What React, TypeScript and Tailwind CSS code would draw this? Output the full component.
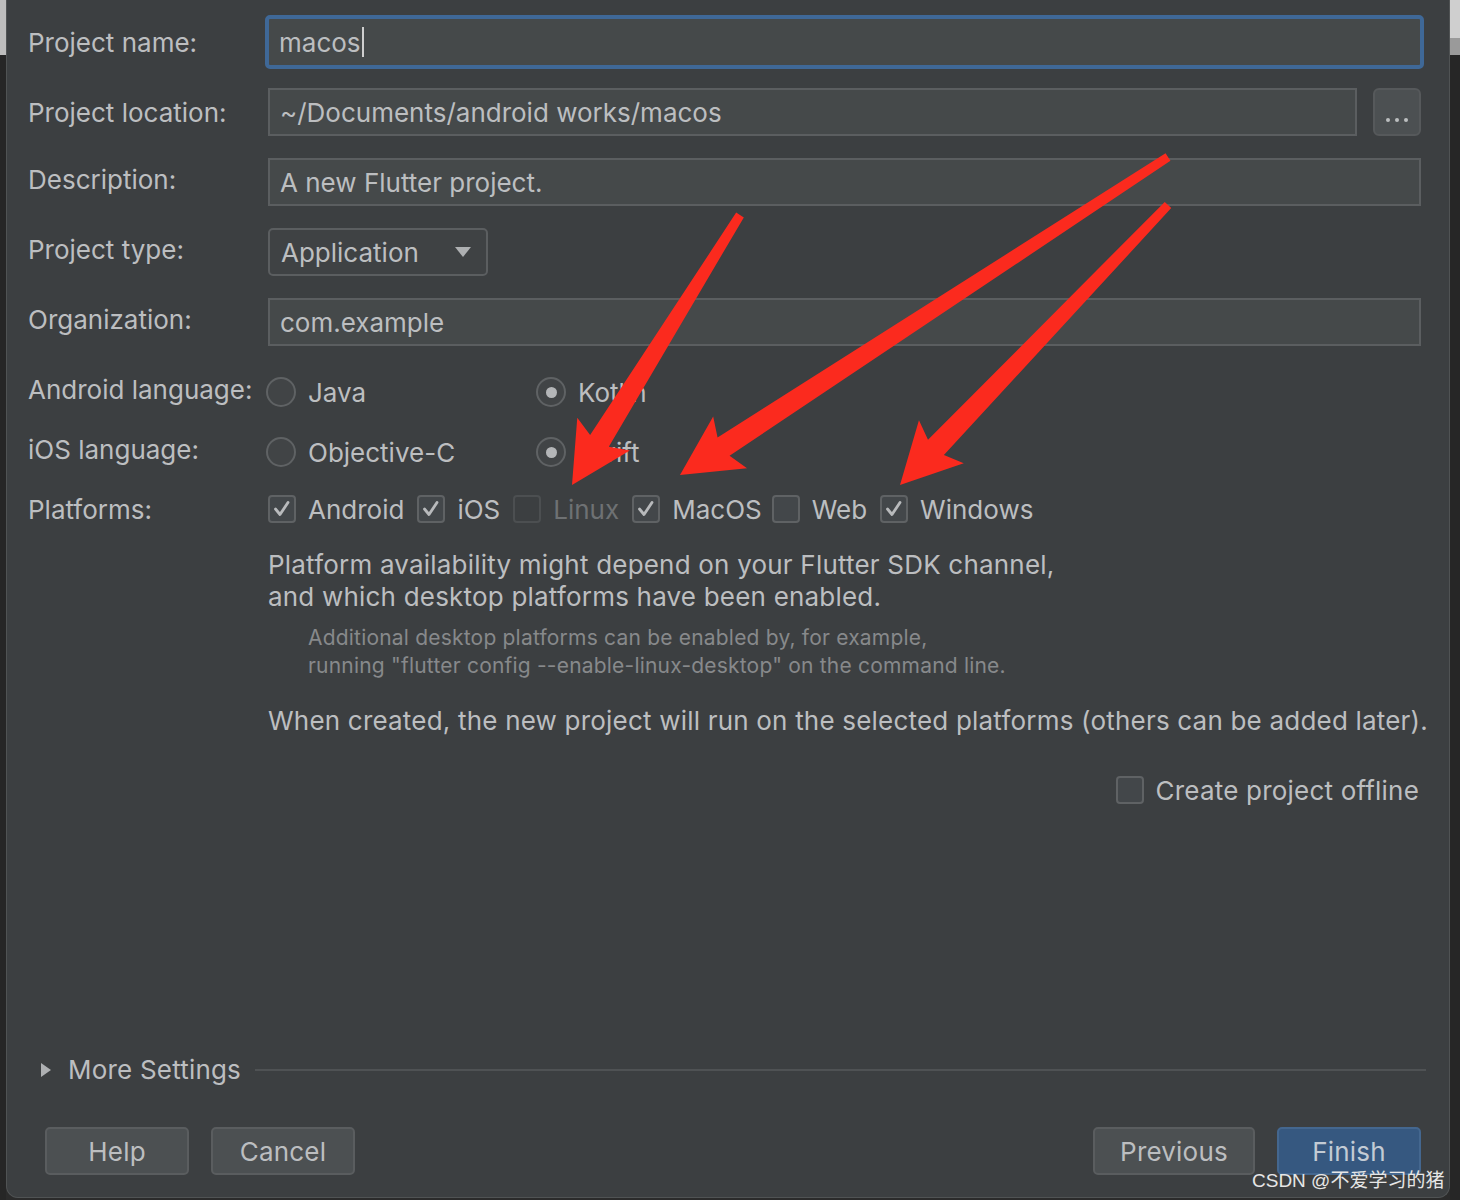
import React from "react"

const font = { fontFamily: "Inter, 'Noto Sans', sans-serif" }

function arrowPoints(t: [number, number], p: [number, number], headLen: number, headW: number, neckW: number, tailW: number) {
  const dx = p[0] - t[0]
  const dy = p[1] - t[1]
  const len = Math.hypot(dx, dy)
  const ux = dx / len
  const uy = dy / len
  const nx = -uy
  const ny = ux
  const bx = p[0] - ux * headLen
  const by = p[1] - uy * headLen
  // wings sit a little further back than the neck, like a marker arrow
  const wx = p[0] - ux * headLen * 1.15
  const wy = p[1] - uy * headLen * 1.15
  const pts: [number, number][] = [
    [t[0] + (nx * tailW) / 2, t[1] + (ny * tailW) / 2],
    [bx + (nx * neckW) / 2, by + (ny * neckW) / 2],
    [wx + (nx * headW) / 2, wy + (ny * headW) / 2],
    p,
    [wx - (nx * headW) / 2, wy - (ny * headW) / 2],
    [bx - (nx * neckW) / 2, by - (ny * neckW) / 2],
    [t[0] - (nx * tailW) / 2, t[1] - (ny * tailW) / 2],
  ]
  return pts.map((q) => q.join(",")).join(" ")
}

const arrows: { t: [number, number]; p: [number, number] }[] = [
  { t: [740, 215], p: [572, 485] },
  { t: [1168, 157], p: [680, 475] },
  { t: [1168, 205], p: [900, 485] },
]

function Label({ children, up }: { children: React.ReactNode; up?: boolean }) {
  return (
    <div className={`w-[240px] shrink-0 text-[26px] text-[#bcbec0] whitespace-nowrap ${up ? "mb-[6px]" : ""}`}>
      {children}
    </div>
  )
}

function Field({ value, className = "" }: { value: string; className?: string }) {
  return (
    <div className={`h-[48px] flex-1 bg-[#45494a] border-2 border-[#5b5e60] flex items-center px-[10px] text-[26px] text-[#bcbec0] ${className}`}>
      {value}
    </div>
  )
}

function Radio({ checked }: { checked?: boolean }) {
  return (
    <div className="w-[30px] h-[30px] rounded-full border-2 border-[#5f6264] bg-[#414446] flex items-center justify-center shrink-0">
      {checked && <div className="w-[11px] h-[11px] rounded-full bg-[#b4b6b8]" />}
    </div>
  )
}

function Checkbox({ checked, dim }: { checked?: boolean; dim?: boolean }) {
  return (
    <div
      className={`w-[28px] h-[28px] rounded-[4px] border-2 flex items-center justify-center shrink-0 ${
        dim ? "border-[#4c4f51] bg-[#3c3f41]" : "border-[#5f6264] bg-[#43474a]"
      }`}
    >
      {checked && (
        <svg width="20" height="20" viewBox="0 0 20 20" fill="none">
          <path d="M3.5 10 L8 15.5 L16 3.5" stroke="#b8babc" strokeWidth="2.8" strokeLinecap="round" strokeLinejoin="round" />
        </svg>
      )}
    </div>
  )
}

function Platform({ name, checked, dim }: { name: string; checked?: boolean; dim?: boolean }) {
  return (
    <div className="flex items-center gap-[12px]">
      <Checkbox checked={checked} dim={dim} />
      <span className={dim ? "text-[#6e7173]" : "text-[#bcbec0]"}>{name}</span>
    </div>
  )
}

function Button({ children, primary }: { children: React.ReactNode; primary?: boolean }) {
  return (
    <div
      className={`h-[48px] rounded-[5px] border-2 flex items-center justify-center text-[26px] tracking-[0.2px] ${
        primary ? "bg-[#365880] border-[#44678f] text-[#c3cbd4]" : "bg-[#4c5052] border-[#5a5d5f] text-[#bcbec0]"
      }`}
    >
      {children}
    </div>
  )
}

export default function App() {
  return (
    <div className="w-[1460px] h-[1200px] bg-[#2b2b2b] flex relative overflow-hidden" style={font}>
      {/* strip of the window behind, left */}
      <div className="w-[6px] flex flex-col shrink-0">
        <div className="h-[55px] bg-[#bdbdbd]" />
        <div className="flex-1 bg-[#262626]" />
      </div>

      {/* dialog */}
      <div className="w-[1444px] h-[1198px] bg-[#3c3f41] border-x border-b border-[#505354] rounded-b-[12px] flex flex-col pl-[21px] pr-[28px] pt-[16px] pb-[22px]">
        <div className="flex items-center h-[52px]">
          <Label>Project name:</Label>
          <div className="h-[54px] flex-1 ml-[-3px] mr-[-3px] rounded-[5px] border-[4px] border-[#3f6897] bg-[#45494a] flex items-center px-[10px] text-[26px] text-[#bcbec0]">
            macos
            <span className="w-[2px] h-[30px] bg-[#cfcfcf] ml-[1px]" />
          </div>
        </div>

        <div className="flex items-center h-[48px] mt-[20px]">
          <Label>Project location:</Label>
          <Field value="~/Documents/android works/macos" />
          <div className="w-[48px] h-[48px] ml-[16px] rounded-[6px] border-2 border-[#56595b] bg-[#4c5052] flex items-end justify-center pb-[12px] gap-[5px]">
            <span className="w-[4px] h-[4px] rounded-full bg-[#bcbec0]" />
            <span className="w-[4px] h-[4px] rounded-full bg-[#bcbec0]" />
            <span className="w-[4px] h-[4px] rounded-full bg-[#bcbec0]" />
          </div>
        </div>

        <div className="flex items-center h-[48px] mt-[22px]">
          <Label up>Description:</Label>
          <Field value="A new Flutter project." />
        </div>

        <div className="flex items-center h-[48px] mt-[22px]">
          <Label up>Project type:</Label>
          <div className="w-[220px] h-[48px] rounded-[5px] border-2 border-[#5b5e60] bg-[#3f4244] flex items-center justify-between pl-[11px] pr-[14px] text-[26px] text-[#bcbec0]">
            Application
            <svg width="18" height="12" viewBox="0 0 18 12">
              <path d="M1 1 H17 L9 11 Z" fill="#aeb0b2" />
            </svg>
          </div>
        </div>

        <div className="flex items-center h-[48px] mt-[22px]">
          <Label up>Organization:</Label>
          <Field value="com.example" />
        </div>

        <div className="flex items-center h-[32px] mt-[30px] text-[26px] text-[#bcbec0]">
          <Label up>Android language:</Label>
          <div className="flex items-center gap-[12px] w-[270px] ml-[-2px]">
            <Radio />
            <span>Java</span>
          </div>
          <div className="flex items-center gap-[12px]">
            <Radio checked />
            <span>Kotlin</span>
          </div>
        </div>

        <div className="flex items-center h-[32px] mt-[28px] text-[26px] text-[#bcbec0]">
          <Label up>iOS language:</Label>
          <div className="flex items-center gap-[12px] w-[270px] ml-[-2px]">
            <Radio />
            <span>Objective-C</span>
          </div>
          <div className="flex items-center gap-[12px]">
            <Radio checked />
            <span>Swift</span>
          </div>
        </div>

        <div className="flex items-center h-[28px] mt-[27px] text-[26px]">
          <Label>Platforms:</Label>
          <div className="flex items-center gap-[13px]">
            <Platform name="Android" checked />
            <Platform name="iOS" checked />
            <Platform name="Linux" dim />
            <div className="flex items-center gap-[10px]">
              <Platform name="MacOS" checked />
              <Platform name="Web" />
            </div>
            <Platform name="Windows" checked />
          </div>
        </div>

        <div className="ml-[240px] flex flex-col">
          <p className="mt-[26px] text-[26px] leading-[32px] text-[#bcbec0] tracking-[0.2px]">
            Platform availability might depend on your Flutter SDK channel,
            <br />
            and which desktop platforms have been enabled.
          </p>
          <p className="mt-[11px] ml-[40px] text-[21px] leading-[28px] text-[#87898b] tracking-[0.2px]">
            Additional desktop platforms can be enabled by, for example,
            <br />
            running "flutter config --enable-linux-desktop" on the command line.
          </p>
          <p className="mt-[25px] text-[26px] leading-[32px] text-[#bcbec0] whitespace-nowrap tracking-[0.2px]">
            When created, the new project will run on the selected platforms (others can be added later).
          </p>
          <div className="mt-[37px] mr-[2px] self-end flex items-center gap-[12px] h-[32px] text-[26px] text-[#bcbec0] tracking-[0.2px]">
            <Checkbox />
            <span>Create project offline</span>
          </div>
        </div>

        <div className="flex-1" />

        <div className="flex items-center h-[32px] ml-[12px] mr-[-5px]">
          <svg width="12" height="16" viewBox="0 0 12 16" className="mr-[16px]">
            <path d="M1 1 L11 8 L1 15 Z" fill="#aeb0b2" />
          </svg>
          <span className="text-[26px] text-[#bcbec0] whitespace-nowrap tracking-[0.2px] mb-[2px]">More Settings</span>
          <div className="flex-1 h-[2px] bg-[#4f5254] ml-[14px]" />
        </div>

        <div className="flex items-center mt-[41px] pl-[17px]">
          <div className="w-[144px]">
            <Button>Help</Button>
          </div>
          <div className="w-[144px] ml-[22px]">
            <Button>Cancel</Button>
          </div>
          <div className="flex-1" />
          <div className="w-[162px]">
            <Button>Previous</Button>
          </div>
          <div className="w-[144px] ml-[22px]">
            <Button primary>Finish</Button>
          </div>
        </div>
      </div>

      {/* strip of the window behind, right */}
      <div className="flex-1 flex flex-col">
        <div className="h-[38px] bg-[#cfcfcf]" />
        <div className="h-[17px] bg-[#9a9a9a]" />
        <div className="flex-1 bg-[#262626]" />
      </div>

      {/* annotation arrows */}
      <svg className="absolute left-0 top-0 pointer-events-none" width="1460" height="1200">
        {arrows.map((a, i) => (
          <polygon key={i} points={arrowPoints(a.t, a.p, 52, 62, 22, 9)} fill="#fb2a1e" strokeLinejoin="round" />
        ))}
      </svg>

      {/* watermark */}
      <div
        className="absolute left-[1252px] top-[1167px] text-[19px] text-[#e6e6e6] whitespace-nowrap"
        style={{ fontFamily: "'Liberation Sans', 'Noto Sans CJK SC', sans-serif" }}
      >
        CSDN @不爱学习的猪
      </div>
    </div>
  )
}
